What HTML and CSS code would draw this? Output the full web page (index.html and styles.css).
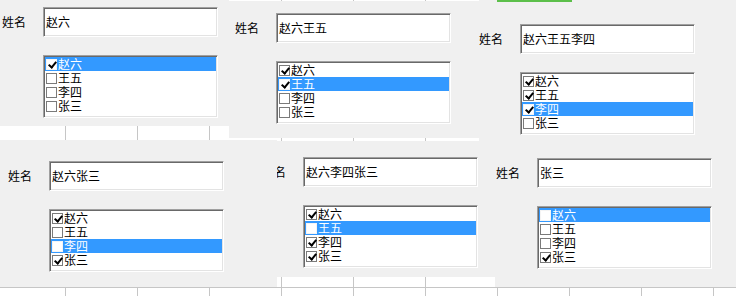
FILE: index.html
```html
<!DOCTYPE html>
<html lang="zh-CN">
<head>
    <meta charset="UTF-8">
    <title>姓名选择</title>
    <link rel="stylesheet" href="styles.css">
</head>
<body>
    <div class="canvas">
        <!-- 1 -->
        <div class="win w1">
            <div class="field"><span class="label">姓名</span><div class="input">赵六</div></div>
            <div class="list">
                <div class="item sel"><i class="box on"></i>赵六</div>
                <div class="item"><i class="box"></i>王五</div>
                <div class="item"><i class="box"></i>李四</div>
                <div class="item"><i class="box"></i>张三</div>
            </div>
        </div>

        <!-- 2 -->
        <div class="win w2">
            <div class="field"><span class="label">姓名</span><div class="input">赵六王五</div></div>
            <div class="list">
                <div class="item"><i class="box on"></i>赵六</div>
                <div class="item sel"><i class="box on"></i>王五</div>
                <div class="item"><i class="box"></i>李四</div>
                <div class="item"><i class="box"></i>张三</div>
            </div>
        </div>

        <!-- 3 -->
        <div class="win w3">
            <div class="strip"></div>
            <div class="field"><span class="label">姓名</span><div class="input">赵六王五李四</div></div>
            <div class="list">
                <div class="item"><i class="box on"></i>赵六</div>
                <div class="item"><i class="box on"></i>王五</div>
                <div class="item sel"><i class="box on"></i>李四</div>
                <div class="item"><i class="box"></i>张三</div>
            </div>
        </div>

        <!-- 5 (sits under 4) -->
        <div class="win w5">
            <div class="field"><span class="label">姓名</span><div class="input">赵六李四张三</div></div>
            <div class="list">
                <div class="item"><i class="box on"></i>赵六</div>
                <div class="item sel"><i class="box"></i>王五</div>
                <div class="item"><i class="box on"></i>李四</div>
                <div class="item"><i class="box on"></i>张三</div>
            </div>
        </div>

        <!-- 4 -->
        <div class="win w4">
            <div class="field"><span class="label">姓名</span><div class="input">赵六张三</div></div>
            <div class="list">
                <div class="item"><i class="box on"></i>赵六</div>
                <div class="item"><i class="box"></i>王五</div>
                <div class="item sel"><i class="box"></i>李四</div>
                <div class="item"><i class="box on"></i>张三</div>
            </div>
        </div>

        <!-- 6 -->
        <div class="win w6">
            <div class="field"><span class="label">姓名</span><div class="input">张三</div></div>
            <div class="list">
                <div class="item sel"><i class="box"></i>赵六</div>
                <div class="item"><i class="box"></i>王五</div>
                <div class="item"><i class="box"></i>李四</div>
                <div class="item"><i class="box on"></i>张三</div>
            </div>
        </div>
    </div>
</body>
</html>
```

FILE: styles.css
```css
body {
    margin: 0;
    font-family: "Noto Sans CJK SC", "Noto Sans", sans-serif;
    font-size: 12px;
    color: #000;
    background-color: #fff;
}

/* sheet grid showing between the windows */
.canvas {
    position: relative;
    width: 736px;
    height: 296px;
    overflow: hidden;
    background-color: #fff;
    background-image:
        linear-gradient(#c6c6c6, #c6c6c6),
        linear-gradient(to right, #c6c6c6 1px, transparent 1px);
    background-repeat: no-repeat, repeat;
    background-size: 100% 1px, 72px 100%;
    background-position: 0 287px, 65px 0;
}

/* window snippets */
.win {
    position: absolute;
    box-sizing: border-box;
    background-color: #f0f0f0;
}

.w1 { left: 0; top: 0; width: 229px; height: 126px; padding: 7px 0 0 2px; }
.w2 { left: 229px; top: 1px; width: 250px; height: 137px; padding: 12px 0 0 6px; }
.w3 { left: 479px; top: 0; width: 257px; height: 145px; padding: 24px 0 0 0; }
.w4 { left: 0; top: 140px; width: 277px; height: 147px; padding: 21px 0 0 8px; z-index: 2; }
.w5 { left: 250px; top: 141px; width: 245px; height: 136px; padding: 16px 0 0 12px; }
.w6 { left: 495px; top: 145px; width: 241px; height: 142px; padding: 13px 0 0 1px; }

.strip {
    position: absolute;
    left: 18px;
    top: 0;
    width: 75px;
    height: 2px;
    background-color: #5cbf4a;
}

/* name row */
.field {
    display: flex;
    align-items: center;
}

.label {
    flex: none;
    width: 41px;
    line-height: 14px;
}

.input,
.list {
    box-sizing: border-box;
    width: 175px;
    background-color: #fff;
    border: 1px solid;
    border-color: #a0a0a0 #fff #fff #a0a0a0;
    box-shadow: inset 1px 1px 0 #696969, inset -1px -1px 0 #e3e3e3;
}

.input {
    height: 30px;
    padding: 0 0 0 2px;
    line-height: 28px;
}

/* checked list */
.list {
    height: 63px;
    margin: 18px 0 0 41px;
    padding: 1px 1px 0 1px;
}

.item {
    display: flex;
    align-items: center;
    height: 14px;
    line-height: 14px;
    padding-left: 1px;
    white-space: nowrap;
}

.item.sel {
    background-color: #3399ff;
    color: #fff;
}

.box {
    position: relative;
    flex: none;
    box-sizing: border-box;
    width: 11px;
    height: 11px;
    margin-right: 1px;
    background-color: #fff;
    border: 1px solid #7a7a7a;
}

.sel .box {
    border-color: #f4f4f4;
}

.box.on::after {
    content: "";
    position: absolute;
    left: 3px;
    top: 0;
    width: 3px;
    height: 6px;
    border: solid #000;
    border-width: 0 2px 2px 0;
    transform: rotate(40deg);
}
```
